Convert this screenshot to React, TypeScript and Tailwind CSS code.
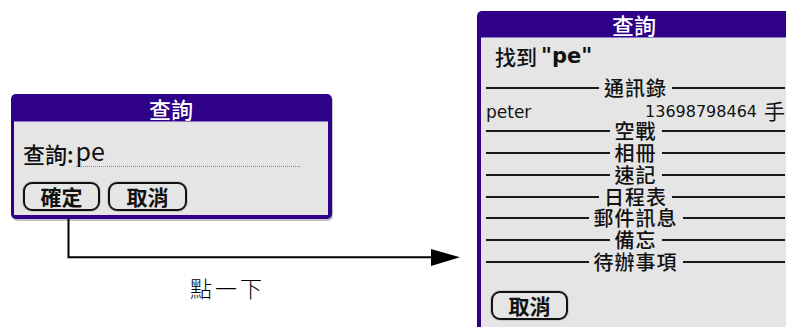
import type { ReactNode } from "react";

const CJK = { fontFamily: '"Noto Sans CJK TC", "Noto Sans", sans-serif' };
const LATIN = { fontFamily: '"DejaVu Sans", sans-serif' };

function PalmButton({ children, className = "" }: { children: ReactNode; className?: string }) {
  return (
    <div
      className={`h-[29px] w-[77px] rounded-[9px] border-2 border-[#111] bg-[#e5e5e5] flex items-center justify-center text-[21px] leading-none font-bold text-[#111] shadow-[0_0_0_1px_#c8c8c8] ${className}`}
    >
      {children}
    </div>
  );
}

function SectionRule({ label }: { label: string }) {
  return (
    <div className="h-[21.75px] flex items-center gap-[5px]">
      <div className="flex-1 h-[2px] bg-[#1a1a1a]" />
      <span className="block text-[20px] leading-[20px] tracking-[1px] text-[#111] font-medium">{label}</span>
      <div className="flex-1 h-[2px] bg-[#1a1a1a]" />
    </div>
  );
}

const SECTIONS = ["空戰", "相冊", "速記", "日程表", "郵件訊息", "備忘", "待辦事項"];

export default function App() {
  return (
    <div className="relative w-[786px] h-[327px] overflow-hidden bg-white flex" style={CJK}>
      {/* left: find dialog + connector */}
      <div className="w-[477px] shrink-0 flex flex-col">
        <div className="ml-[11px] mt-[94px] w-[321px] h-[125px] rounded-[5px] bg-[#2f0088] pl-[3px] pr-[4px] pb-[4px] flex flex-col shadow-[1px_2px_0_#c4c4c4]">
          <div className="h-[27px] flex items-center justify-center text-white text-[22px] leading-none font-medium">
            查詢
          </div>
          <div className="flex-1 bg-[#e5e5e5] border-t border-[#8a7cc6] pl-[9px] pt-[14px] flex flex-col">
            <div className="flex items-end h-[31px]">
              <span className="text-[22px] leading-none font-medium text-[#111] pb-[3px]">查詢:</span>
              <div className="ml-[2px] w-[224px] h-[31px] border-b border-dotted border-[#8a8a8a] flex items-end">
                <span className="text-[25px] leading-none text-[#111] pb-[3px]">pe</span>
              </div>
            </div>
            <div className="flex gap-[8px] mt-[15px]">
              <PalmButton>確定</PalmButton>
              <PalmButton className="w-[79px]">取消</PalmButton>
            </div>
          </div>
        </div>
        <svg width="466" height="50" className="block shrink-0">
          <path d="M68.5 0 V38.3 H433" fill="none" stroke="#000" strokeWidth="2" />
          <polygon points="431,30 460,38.3 431,47" fill="#000" />
        </svg>
        <div className="ml-[190px] mt-[6px] text-[22px] leading-[24px] font-light tracking-[3px] text-black">
          點一下
        </div>
      </div>

      {/* right: results dialog */}
      <div className="mt-[11px] w-[314px] h-[330px] shrink-0 rounded-[5px] bg-[#2f0088] pl-[4px] pr-[4px] flex flex-col">
        <div className="h-[26px] flex items-center justify-center text-white text-[22px] leading-none font-medium">
          查詢
        </div>
        <div className="flex-1 bg-[#e5e5e5] border-t border-[#8a7cc6] pl-[5px] pr-[2px] flex flex-col">
          <div className="h-[39px] flex items-center pl-[9px] pb-[3px] text-[21px] leading-none text-[#111] font-medium">
            找到
            <span className="ml-[4px] font-bold" style={LATIN}>
              "pe"
            </span>
          </div>
          <SectionRule label="通訊錄" />
          <div className="h-[21.75px] flex items-center justify-between pt-[5px] text-[#111]">
            <span className="block text-[17px] leading-[17px]" style={LATIN}>
              peter
            </span>
            <span className="flex items-center">
              <span className="block text-[16px] leading-[16px]" style={LATIN}>13698798464</span>
              <span className="block ml-[7px] text-[21px] leading-[21px] -mt-[3px]">手</span>
            </span>
          </div>
          {SECTIONS.map((s) => (
            <SectionRule key={s} label={s} />
          ))}
          <div className="mt-[18px] ml-[5px]">
            <PalmButton>取消</PalmButton>
          </div>
        </div>
      </div>
    </div>
  );
}
